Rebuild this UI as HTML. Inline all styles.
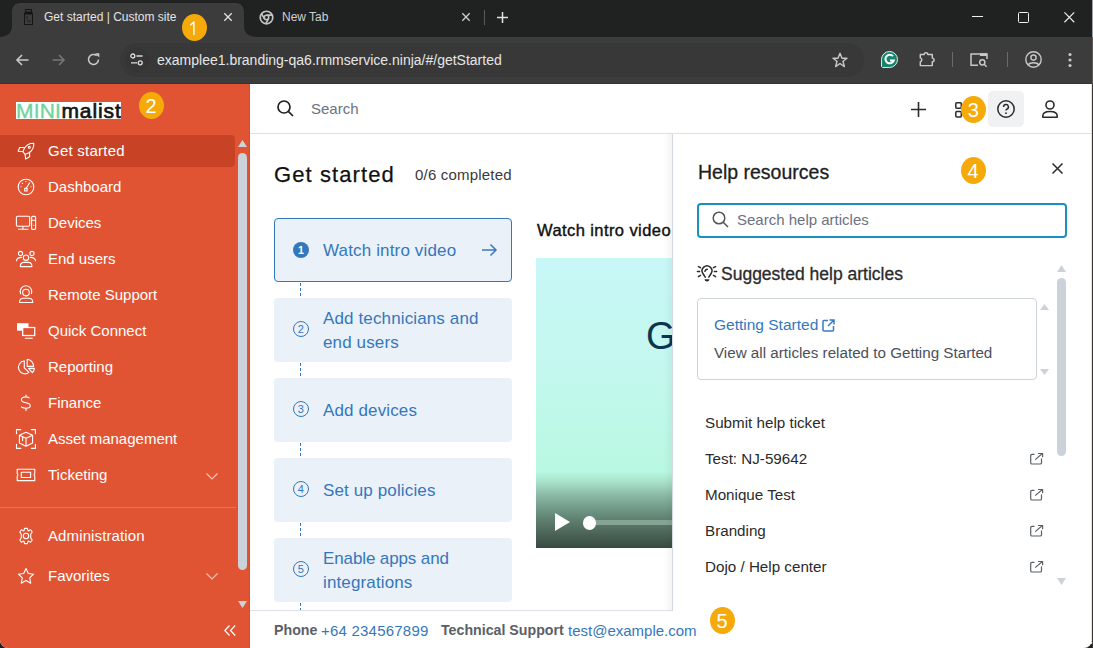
<!DOCTYPE html>
<html><head><meta charset="utf-8">
<style>
*{box-sizing:border-box;margin:0;padding:0}
html,body{width:1093px;height:648px;overflow:hidden;background:#202121;font-family:"Liberation Sans",sans-serif}
.a{position:absolute}
.t{position:absolute;white-space:nowrap;line-height:1}
svg{position:absolute;overflow:visible}
.badge{position:absolute;width:25px;height:27px;border-radius:50%;background:#f5aa0a;color:#fff;font-size:20px;text-align:center;line-height:28px}
.dash{position:absolute;left:300px;width:1px;background:repeating-linear-gradient(#3577bd 0 3px,transparent 3px 5px)}
</style></head><body>
<div class="a" style="left:0px;top:0px;width:1093px;height:37px;background:#202121;"></div>
<svg style="left:0px;top:3px;" width="256" height="34" viewBox="0 0 256 34"><path d="M0 34C6 34 12 30 12 24V9C12 4 15 0 20 0H236C241 0 244 4 244 9V24C244 30 250 34 256 34Z" fill="#3c3c3c"/></svg>
<svg style="left:24px;top:9px;" width="10" height="16" viewBox="0 0 10 16"><rect x="1.5" y="0.5" width="6" height="2.5" fill="none" stroke="#151515" stroke-width="1"/><rect x="0.5" y="3" width="8" height="2" fill="#151515"/><rect x="0.5" y="5" width="8" height="10.5" fill="none" stroke="#151515" stroke-width="1"/><path d="M2.5 7L3.5 10M6 11V13M3 12H5" stroke="#151515" stroke-width="0.8"/></svg>
<div class="t" style="left:44px;top:11px;font-size:12px;color:#e3e3e3;font-weight:400;letter-spacing:0px;">Get started | Custom site</div>
<svg style="left:224px;top:13px;" width="8" height="8" viewBox="0 0 8 8"><path d="M0.3 0.3L7.7 7.7M7.7 0.3L0.3 7.7" stroke="#e3e3e3" stroke-width="1.3"/></svg>
<svg style="left:259px;top:10px;" width="15" height="15" viewBox="0 0 16 16"><circle cx="8" cy="8" r="6.7" fill="none" stroke="#c4c4c4" stroke-width="1.8"/><circle cx="8" cy="8" r="2.4" fill="none" stroke="#c4c4c4" stroke-width="1.7"/><path d="M8 5.5H14.3M5.8 9.3L2.6 3.9M10.2 9.3L7 14.7" stroke="#c4c4c4" stroke-width="1.7"/></svg>
<div class="t" style="left:282px;top:11px;font-size:12px;color:#d0d0d0;font-weight:400;letter-spacing:0px;">New Tab</div>
<svg style="left:462px;top:13px;" width="8" height="8" viewBox="0 0 8 8"><path d="M0.3 0.3L7.7 7.7M7.7 0.3L0.3 7.7" stroke="#d0d0d0" stroke-width="1.3"/></svg>
<div class="a" style="left:484px;top:10px;width:1px;height:15px;background:#5a5a5a;"></div>
<svg style="left:497px;top:12px;" width="11" height="11" viewBox="0 0 11 11"><path d="M5.5 0V11M0 5.5H11" stroke="#e3e3e3" stroke-width="1.5"/></svg>
<div class="a" style="left:972px;top:16px;width:11px;height:1px;background:#f0f0f0;"></div>
<div class="a" style="left:1018px;top:12px;width:10.5px;height:10.5px;background:transparent;border:1.2px solid #f0f0f0;border-radius:1.5px"></div>
<svg style="left:1063.5px;top:11.8px;" width="10.7" height="10.7" viewBox="0 0 12 12"><path d="M0.5 0.5L11.5 11.5M11.5 0.5L0.5 11.5" stroke="#f0f0f0" stroke-width="1.3"/></svg>
<div class="a" style="left:0px;top:37px;width:1093px;height:47px;background:#3c3c3c;"></div>
<div class="a" style="left:0px;top:83px;width:1093px;height:1px;background:#333;"></div>
<svg style="left:16px;top:54px;" width="13" height="12" viewBox="0 0 13 12"><path d="M12.5 6H1.2M6 1L1 6L6 11" fill="none" stroke="#c8c8c8" stroke-width="1.6"/></svg>
<svg style="left:52px;top:54px;" width="13" height="12" viewBox="0 0 13 12"><path d="M0.5 6H11.8M7 1L12 6L7 11" fill="none" stroke="#767676" stroke-width="1.6"/></svg>
<svg style="left:87px;top:53px;" width="13" height="13" viewBox="0 0 13 13"><path d="M11.5 6.5A5 5 0 1 1 9.8 2.7" fill="none" stroke="#c8c8c8" stroke-width="1.6"/><path d="M8 0.3H12.3V4.6Z" fill="#c8c8c8"/></svg>
<div class="a" style="left:120px;top:43px;width:744px;height:34px;background:#383838;border-radius:17px"></div>
<div class="a" style="left:125px;top:48px;width:24px;height:24px;background:#353535;border-radius:50%"></div>
<svg style="left:130px;top:53px;" width="14" height="13" viewBox="0 0 14 13"><circle cx="2.8" cy="3" r="2" fill="none" stroke="#dcdcdc" stroke-width="1.3"/><path d="M6.5 3H12.5M1 9.8H7" stroke="#dcdcdc" stroke-width="1.3"/><circle cx="10.2" cy="9.8" r="2" fill="none" stroke="#dcdcdc" stroke-width="1.3"/></svg>
<div class="t" style="left:157px;top:53px;font-size:14px;color:#e6e6e6;font-weight:400;letter-spacing:0px;">examplee1.branding-qa6.rmmservice.ninja/#/getStarted</div>
<svg style="left:832px;top:52px;" width="16" height="16" viewBox="0 0 16 16"><path d="M8 1.3L10 6.2H15L11 9.3L12.4 14.6L8 11.5L3.6 14.6L5 9.3L1 6.2H6Z" fill="none" stroke="#c8c8c8" stroke-width="1.4" stroke-linejoin="round"/></svg>
<svg style="left:881px;top:51px;" width="17" height="17" viewBox="0 0 17 17"><path d="M8.5 0.5A8 8 0 1 1 8.5 16.5H1.5L0.5 15.5V8.5A8 8 0 0 1 8.5 0.5Z" fill="#15866e"/><path d="M8.5 0.5A8 8 0 1 1 8.5 16.5H1.5L0.5 15.5V8.5A8 8 0 0 1 8.5 0.5Z" fill="none" stroke="#e8e8e8" stroke-width="1"/><path d="M12 5.2A4.3 4.3 0 1 0 12.8 9.5H9" fill="none" stroke="#fff" stroke-width="2"/></svg>
<svg style="left:917px;top:50px;" width="20" height="18" viewBox="0 0 20 18"><path d="M3.3 4.5H7.2A1.8 1.8 0 0 1 10.8 4.5H15.3V8.1A1.8 1.8 0 0 1 15.3 11.7V15.6H3.3V11.8A2 2 0 0 0 3.3 7.9Z" fill="none" stroke="#cacaca" stroke-width="1.45" stroke-linejoin="round"/></svg>
<div class="a" style="left:952px;top:52px;width:1px;height:15px;background:#6a6a6a;"></div>
<svg style="left:970px;top:52px;" width="19" height="16" viewBox="0 0 19 16"><path d="M8 13.2H1V2H17V7" fill="none" stroke="#c8c8c8" stroke-width="1.5"/><rect x="10" y="1.2" width="7" height="2.8" fill="#c8c8c8"/><circle cx="12.3" cy="10.3" r="2.6" fill="none" stroke="#c8c8c8" stroke-width="1.5"/><path d="M14.2 12.3L16.6 14.8" stroke="#c8c8c8" stroke-width="1.5"/></svg>
<div class="a" style="left:1007px;top:52px;width:1px;height:15px;background:#6a6a6a;"></div>
<svg style="left:1025px;top:51px;" width="17" height="17" viewBox="0 0 17 17"><circle cx="8.5" cy="8.5" r="7.7" fill="none" stroke="#c8c8c8" stroke-width="1.4"/><circle cx="8.5" cy="6.6" r="2.6" fill="none" stroke="#c8c8c8" stroke-width="1.4"/><path d="M3.3 13.8C5 11 12 11 13.7 13.8" fill="none" stroke="#c8c8c8" stroke-width="1.4"/></svg>
<svg style="left:1068px;top:52px;" width="4" height="16" viewBox="0 0 4 16"><circle cx="2" cy="2.5" r="1.6" fill="#c8c8c8"/><circle cx="2" cy="8" r="1.6" fill="#c8c8c8"/><circle cx="2" cy="13.5" r="1.6" fill="#c8c8c8"/></svg>
<div class="a" style="left:0px;top:84px;width:1092px;height:564px;background:#fff;border-radius:0 0 8px 8px"></div>
<div class="a" style="left:1092px;top:0px;width:1px;height:37px;background:#9aa0a8;"></div>
<div class="a" style="left:1092px;top:37px;width:1px;height:47px;background:#5e5858;"></div>
<div class="a" style="left:1092px;top:84px;width:1px;height:564px;background:#3d3535;"></div>
<div class="a" style="left:1091px;top:84px;width:1px;height:560px;background:#dfe4ea;"></div>
<div class="badge" style="left:181.5px;top:14.2px"></div>
<svg style="left:189px;top:20px;" width="8" height="16" viewBox="0 0 8 16"><path d="M5.6 15V1.3H4.8L1.2 4.2V5.9L4.2 3.7V15Z" fill="#fff"/></svg>
<div class="a" style="left:0px;top:84px;width:250px;height:564px;background:#e15433;border-bottom-left-radius:8px"></div>
<div class="a" style="left:249px;top:84px;width:1px;height:564px;background:#d94b29;"></div>
<div class="a" style="left:16px;top:102px;width:105px;height:17px;background:#fff;overflow:hidden"><div class="t" style="left:0;top:-2px;font-size:21px;color:#6fd49b;letter-spacing:0.15px;-webkit-text-stroke:0.35px #6fd49b">MINI<span style="color:#151515;letter-spacing:0.9px;-webkit-text-stroke:0.7px #151515;margin-left:0.5px">malist</span></div></div>
<div class="badge" style="left:138.6px;top:92.2px">2</div>
<div class="a" style="left:0px;top:135px;width:235px;height:32px;background:#c84325;border-radius:0 4px 4px 0"></div>
<div class="t" style="left:48px;top:143px;font-size:15px;color:#fff;font-weight:400;letter-spacing:0.25px;">Get started</div>
<div class="t" style="left:48px;top:179px;font-size:15px;color:#fff;font-weight:400;letter-spacing:0px;">Dashboard</div>
<div class="t" style="left:48px;top:215px;font-size:15px;color:#fff;font-weight:400;letter-spacing:0px;">Devices</div>
<div class="t" style="left:48px;top:251px;font-size:15px;color:#fff;font-weight:400;letter-spacing:0px;">End users</div>
<div class="t" style="left:48px;top:287px;font-size:15px;color:#fff;font-weight:400;letter-spacing:0px;">Remote Support</div>
<div class="t" style="left:48px;top:323px;font-size:15px;color:#fff;font-weight:400;letter-spacing:0px;">Quick Connect</div>
<div class="t" style="left:48px;top:359px;font-size:15px;color:#fff;font-weight:400;letter-spacing:0px;">Reporting</div>
<div class="t" style="left:48px;top:395px;font-size:15px;color:#fff;font-weight:400;letter-spacing:0px;">Finance</div>
<div class="t" style="left:48px;top:431px;font-size:15px;color:#fff;font-weight:400;letter-spacing:0px;">Asset management</div>
<div class="t" style="left:48px;top:467px;font-size:15px;color:#fff;font-weight:400;letter-spacing:0px;">Ticketing</div>
<div class="t" style="left:48px;top:528px;font-size:15px;color:#fff;font-weight:400;letter-spacing:0.12px;">Administration</div>
<div class="t" style="left:48px;top:568px;font-size:15px;color:#fff;font-weight:400;letter-spacing:0px;">Favorites</div>
<div class="a" style="left:0px;top:507px;width:236px;height:1px;background:#e6705a;"></div>
<svg style="left:14px;top:140px;" width="24" height="24" viewBox="0 0 24 24"><path d="M19.8 3.2C15.3 3 12.1 5.3 10.1 8.7L8.9 11.9L11.2 14.3L14.6 12.9C18 10.9 20.1 7.6 19.8 3.2Z" fill="none" stroke="#fff" stroke-width="1.1" stroke-linejoin="round" stroke-linecap="round"/><circle cx="15.3" cy="7.3" r="1" fill="none" stroke="#fff" stroke-width="1.1" stroke-linejoin="round" stroke-linecap="round"/><path d="M10.3 7.5L5.7 7.5L4.2 11.2L8.8 11.5M15.6 12.4L15.6 16.7L11.6 18.9L11.1 14.4" fill="none" stroke="#fff" stroke-width="1.1" stroke-linejoin="round" stroke-linecap="round"/></svg>
<svg style="left:14px;top:176px;" width="24" height="24" viewBox="0 0 24 24"><circle cx="12" cy="11" r="7.8" fill="none" stroke="#fff" stroke-width="1.1" stroke-linejoin="round" stroke-linecap="round"/><path d="M12.3 12.2L15.6 6.9" fill="none" stroke="#fff" stroke-width="1.1" stroke-linejoin="round" stroke-linecap="round"/><rect x="10.7" y="12.4" width="2.4" height="2.6" fill="none" stroke="#fff" stroke-width="1.1" stroke-linejoin="round" stroke-linecap="round"/><path d="M8.4 7.4h.1M11.9 5.6h.1M6.9 10.8h.1M17 10.8h.1" fill="none" stroke="#fff" stroke-width="1.1" stroke-linejoin="round" stroke-linecap="round" stroke-width="1.6"/></svg>
<svg style="left:14px;top:211px;" width="24" height="24" viewBox="0 0 24 24"><rect x="2.4" y="5.2" width="13.3" height="10" rx="1.2" fill="none" stroke="#fff" stroke-width="1.1" stroke-linejoin="round" stroke-linecap="round"/><path d="M8.9 15.4V17.8M4.4 18.2H14" fill="none" stroke="#fff" stroke-width="1.1" stroke-linejoin="round" stroke-linecap="round"/><rect x="17.6" y="5.4" width="4" height="13" rx="1" fill="none" stroke="#fff" stroke-width="1.1" stroke-linejoin="round" stroke-linecap="round"/><path d="M17.8 9.3H21.4" fill="none" stroke="#fff" stroke-width="1.1" stroke-linejoin="round" stroke-linecap="round"/><path d="M19.6 14.3h.1" fill="none" stroke="#fff" stroke-width="1.1" stroke-linejoin="round" stroke-linecap="round" stroke-width="1.5"/></svg>
<svg style="left:14px;top:247px;" width="24" height="24" viewBox="0 0 24 24"><circle cx="6.5" cy="6.5" r="2.1" fill="none" stroke="#fff" stroke-width="1.1" stroke-linejoin="round" stroke-linecap="round"/><circle cx="18" cy="6.5" r="2.1" fill="none" stroke="#fff" stroke-width="1.1" stroke-linejoin="round" stroke-linecap="round"/><circle cx="12" cy="10.7" r="2.7" fill="none" stroke="#fff" stroke-width="1.1" stroke-linejoin="round" stroke-linecap="round"/><path d="M2.5 13.8Q2.8 10.5 7.6 10.4M21.5 13.8Q21.2 10.5 16.4 10.4" fill="none" stroke="#fff" stroke-width="1.1" stroke-linejoin="round" stroke-linecap="round"/><path d="M6.3 19.6Q6.3 15.4 9.8 15.4H14.4Q17.9 15.4 17.9 19.6Z" fill="none" stroke="#fff" stroke-width="1.1" stroke-linejoin="round" stroke-linecap="round"/></svg>
<svg style="left:14px;top:283px;" width="24" height="24" viewBox="0 0 24 24"><circle cx="12" cy="9.6" r="3.3" fill="none" stroke="#fff" stroke-width="1.1" stroke-linejoin="round" stroke-linecap="round"/><path d="M6.6 10.8A5.8 5.8 0 1 1 17.4 10.6" fill="none" stroke="#fff" stroke-width="1.1" stroke-linejoin="round" stroke-linecap="round"/><path d="M11.8 12.8H13.3" fill="none" stroke="#fff" stroke-width="1.1" stroke-linejoin="round" stroke-linecap="round"/><path d="M5.5 19.5Q5.6 15.3 9 15.3H15.3Q18.6 15.3 18.8 19.5Z" fill="none" stroke="#fff" stroke-width="1.1" stroke-linejoin="round" stroke-linecap="round"/></svg>
<svg style="left:14px;top:319px;" width="24" height="24" viewBox="0 0 24 24"><rect x="3" y="4.2" width="11.5" height="7.5" fill="#fff"/><rect x="8.7" y="8.5" width="12" height="8" fill="#e05332" stroke="#fff" stroke-width="1.25"/><path d="M11.3 19.3H18.3" fill="none" stroke="#fff" stroke-width="1.1" stroke-linejoin="round" stroke-linecap="round"/></svg>
<svg style="left:14px;top:355px;" width="24" height="24" viewBox="0 0 24 24"><path d="M10.3 5.84V12.9L15 17.4A6.5 6.5 0 1 1 10.3 5.84Z" fill="none" stroke="#fff" stroke-width="1.1" stroke-linejoin="round" stroke-linecap="round"/><path d="M13.2 4.2V11.4H19.6A7 7 0 0 0 13.2 4.2Z" fill="none" stroke="#fff" stroke-width="1.1" stroke-linejoin="round" stroke-linecap="round"/><path d="M14.6 13.4H20.4A6.8 6.8 0 0 1 18.4 17.6Z" fill="none" stroke="#fff" stroke-width="1.1" stroke-linejoin="round" stroke-linecap="round"/></svg>
<svg style="left:14px;top:391px;" width="24" height="24" viewBox="0 0 24 24"><path d="M15.2 6.9Q14 5.9 12 5.9Q7.4 5.9 7.4 8.8Q7.4 11.2 11.8 11.8Q16.3 12.5 16.3 14.7Q16.3 17.2 12 17.2Q9.4 17.2 7.5 16.1M12 4V5.9M12 17.2V19.4" fill="none" stroke="#fff" stroke-width="1.1" stroke-linejoin="round" stroke-linecap="round"/></svg>
<svg style="left:14px;top:427px;" width="24" height="24" viewBox="0 0 24 24"><path d="M2.5 6.8V2.6H6.8M17.3 2.6H21.4V6.8M2.5 17.3V21.4H6.8M17.3 21.4H21.4V17.3" fill="none" stroke="#fff" stroke-width="1.1" stroke-linejoin="round" stroke-linecap="round"/><path d="M12 5.3L18.6 8.3V16L12 19.2L5.4 16V8.3Z M5.4 8.3L12 11.3L18.6 8.3M12 11.3V19.2M8.6 9.9V13.5" fill="none" stroke="#fff" stroke-width="1.1" stroke-linejoin="round" stroke-linecap="round"/></svg>
<svg style="left:14px;top:463px;" width="24" height="24" viewBox="0 0 24 24"><path d="M3.2 6.2H20.8V10.6Q19.4 11.8 20.8 13.2V17.6H3.2V13.2Q4.6 11.8 3.2 10.6Z" fill="none" stroke="#fff" stroke-width="1.1" stroke-linejoin="round" stroke-linecap="round"/><rect x="7.3" y="9.3" width="9.3" height="5.2" fill="none" stroke="#fff" stroke-width="1.1" stroke-linejoin="round" stroke-linecap="round"/></svg>
<svg style="left:14px;top:524px;" width="24" height="24" viewBox="0 0 24 24"><path d="M10.6 4.4H13.4L14.1 6.9L16.6 5.8L18.2 8L16.7 10.3V13.7L18.2 16L16.6 18.2L14.1 17.1L13.4 19.6H10.6L9.9 17.1L7.4 18.2L5.8 16L7.3 13.7V10.3L5.8 8L7.4 5.8L9.9 6.9Z" fill="none" stroke="#fff" stroke-width="1.1" stroke-linejoin="round" stroke-linecap="round"/><circle cx="12" cy="12" r="2.7" fill="none" stroke="#fff" stroke-width="1.1" stroke-linejoin="round" stroke-linecap="round"/></svg>
<svg style="left:14px;top:564px;" width="24" height="24" viewBox="0 0 24 24"><path d="M12 4.5L14.3 9.5L19.6 10.2L15.7 13.9L16.7 19.2L12 16.6L7.3 19.2L8.3 13.9L4.4 10.2L9.7 9.5Z" fill="none" stroke="#fff" stroke-width="1.1" stroke-linejoin="round" stroke-linecap="round"/></svg>
<svg style="left:206px;top:473px;" width="12" height="7" viewBox="0 0 12 7"><path d="M0.5 0.5L6 6L11.5 0.5" fill="none" stroke="#f5c3b5" stroke-width="1.2"/></svg>
<svg style="left:206px;top:573px;" width="12" height="7" viewBox="0 0 12 7"><path d="M0.5 0.5L6 6L11.5 0.5" fill="none" stroke="#f5c3b5" stroke-width="1.2"/></svg>
<svg style="left:224px;top:625px;" width="12" height="11" viewBox="0 0 12 11"><path d="M5.5 0.5L0.8 5.5L5.5 10.5M11.2 0.5L6.5 5.5L11.2 10.5" fill="none" stroke="#fff" stroke-width="1.2"/></svg>
<svg style="left:238px;top:140px;" width="9" height="7" viewBox="0 0 9 7"><path d="M4.5 0L9 7H0Z" fill="#ccd2d9"/></svg>
<div class="a" style="left:238px;top:153px;width:9px;height:417px;background:#ccd2d9;border-radius:4.5px"></div>
<svg style="left:238px;top:601px;" width="9" height="7" viewBox="0 0 9 7"><path d="M0 0H9L4.5 7Z" fill="#ccd2d9"/></svg>
<div class="a" style="left:250px;top:133px;width:842px;height:1px;background:#dde1e6;"></div>
<svg style="left:277px;top:100px;" width="17" height="17" viewBox="0 0 17 17"><circle cx="7" cy="7" r="6" fill="none" stroke="#1f1f1f" stroke-width="1.7"/><path d="M11.3 11.3L16 16" stroke="#1f1f1f" stroke-width="1.7"/></svg>
<div class="t" style="left:311px;top:101px;font-size:15px;color:#6b7280;font-weight:400;letter-spacing:0px;">Search</div>
<svg style="left:911px;top:102px;" width="15" height="15" viewBox="0 0 15 15"><path d="M7.5 0V15M0 7.5H15" stroke="#2b2b2b" stroke-width="1.6"/></svg>
<svg style="left:955px;top:102px;" width="16" height="16" viewBox="0 0 16 16"><rect x="0.8" y="0.8" width="5.5" height="5.5" rx="1" fill="none" stroke="#2b2b2b" stroke-width="1.5"/><rect x="0.8" y="9.5" width="5.5" height="5.5" rx="1" fill="none" stroke="#2b2b2b" stroke-width="1.5"/></svg>
<div class="badge" style="left:960.7px;top:96.2px">3</div>
<div class="a" style="left:988px;top:91px;width:36px;height:36px;background:#f0f1f3;border-radius:5px"></div>
<svg style="left:997px;top:100px;" width="18" height="18" viewBox="0 0 18 18"><circle cx="9" cy="9" r="8.2" fill="none" stroke="#2b2b2b" stroke-width="1.5"/><path d="M6.6 7A2.4 2.4 0 1 1 9.8 9.2C9.2 9.5 9 9.9 9 10.6" fill="none" stroke="#2b2b2b" stroke-width="1.5"/><circle cx="9" cy="13.2" r="0.9" fill="#2b2b2b"/></svg>
<svg style="left:1042px;top:100px;" width="16" height="18" viewBox="0 0 16 18"><circle cx="8" cy="5" r="4" fill="none" stroke="#2b2b2b" stroke-width="1.6"/><path d="M0.8 17.2V16C0.8 13 4 11.5 8 11.5S15.2 13 15.2 16V17.2Z" fill="none" stroke="#2b2b2b" stroke-width="1.6" stroke-linejoin="round"/></svg>
<div class="t" style="left:274px;top:164px;font-size:22px;color:#111;font-weight:400;letter-spacing:1.1px;-webkit-text-stroke:0.25px #111">Get started</div>
<div class="t" style="left:415px;top:167px;font-size:15px;color:#3a3a3a;font-weight:400;letter-spacing:0.2px;">0/6 completed</div>
<div class="dash" style="top:283px;height:13px"></div>
<div class="dash" style="top:363px;height:13px"></div>
<div class="dash" style="top:443px;height:13px"></div>
<div class="dash" style="top:523px;height:13px"></div>
<div class="dash" style="top:603px;height:8px"></div>
<div class="a" style="left:274px;top:218px;width:238px;height:64px;background:#eaf1f8;border:1px solid #3577bd;border-radius:4px"></div>
<div class="a" style="left:293px;top:241.5px;width:16px;height:16px;background:#3577bd;border-radius:50%"></div>
<div class="t" style="left:298px;top:244.5px;font-size:10.5px;color:#fff;font-weight:700;letter-spacing:0px;">1</div>
<div class="t" style="left:323px;top:241.5px;font-size:17px;color:#3577bd;font-weight:400;letter-spacing:0.15px;">Watch intro video</div>
<svg style="left:482px;top:244px;" width="15" height="12" viewBox="0 0 15 12"><path d="M0 6H14M8.5 0.5L14 6L8.5 11.5" fill="none" stroke="#3b7abf" stroke-width="1.5"/></svg>
<div class="a" style="left:274px;top:298px;width:238px;height:64px;background:#eaf1f8;border-radius:4px"></div>
<div class="a" style="left:293px;top:321px;width:16px;height:16px;background:transparent;border:1.2px solid #3577bd;border-radius:50%"></div>
<div class="t" style="left:297.8px;top:323.5px;font-size:11px;color:#3577bd;font-weight:400;letter-spacing:0px;">2</div>
<div class="t" style="left:323px;top:309.5px;font-size:17px;color:#3577bd;font-weight:400;letter-spacing:0.13px;">Add technicians and</div>
<div class="t" style="left:323px;top:333.5px;font-size:17px;color:#3577bd;font-weight:400;letter-spacing:0.13px;">end users</div>
<div class="a" style="left:274px;top:378px;width:238px;height:64px;background:#eaf1f8;border-radius:4px"></div>
<div class="a" style="left:293px;top:401px;width:16px;height:16px;background:transparent;border:1.2px solid #3577bd;border-radius:50%"></div>
<div class="t" style="left:297.8px;top:403.5px;font-size:11px;color:#3577bd;font-weight:400;letter-spacing:0px;">3</div>
<div class="t" style="left:323px;top:401.5px;font-size:17px;color:#3577bd;font-weight:400;letter-spacing:0.13px;">Add devices</div>
<div class="a" style="left:274px;top:458px;width:238px;height:64px;background:#eaf1f8;border-radius:4px"></div>
<div class="a" style="left:293px;top:481px;width:16px;height:16px;background:transparent;border:1.2px solid #3577bd;border-radius:50%"></div>
<div class="t" style="left:297.8px;top:483.5px;font-size:11px;color:#3577bd;font-weight:400;letter-spacing:0px;">4</div>
<div class="t" style="left:323px;top:481.5px;font-size:17px;color:#3577bd;font-weight:400;letter-spacing:0.13px;">Set up policies</div>
<div class="a" style="left:274px;top:538px;width:238px;height:64px;background:#eaf1f8;border-radius:4px"></div>
<div class="a" style="left:293px;top:561px;width:16px;height:16px;background:transparent;border:1.2px solid #3577bd;border-radius:50%"></div>
<div class="t" style="left:297.8px;top:563.5px;font-size:11px;color:#3577bd;font-weight:400;letter-spacing:0px;">5</div>
<div class="t" style="left:323px;top:549.5px;font-size:17px;color:#3577bd;font-weight:400;letter-spacing:-0.12px;">Enable apps and</div>
<div class="t" style="left:323px;top:573.5px;font-size:17px;color:#3577bd;font-weight:400;letter-spacing:0.13px;">integrations</div>
<div class="t" style="left:537px;top:222px;font-size:16.5px;color:#111;font-weight:400;letter-spacing:0.42px;-webkit-text-stroke:0.4px #111">Watch intro video</div>
<div class="a" style="left:536px;top:258px;width:136px;height:290px;overflow:hidden;background:linear-gradient(#c8f7f7 0%,#c3f8ee 40%,#b9f8e2 73.5%,#a9e3cb 77%,#8ab8a4 82%,#6e9583 87%,#5b7b6b 91%,#4a6255 95.5%,#384a3f 100%)"><div class="t" style="left:110px;top:59px;font-size:38px;color:#0c3550">G</div><svg style="left:19px;top:255px" width="15" height="18" viewBox="0 0 15 18"><path d="M0 0L15 9L0 18Z" fill="#fff"/></svg><div class="a" style="left:58px;top:261.5px;width:90px;height:5px;background:#87a394"></div><div class="a" style="left:46.5px;top:257.5px;width:13.5px;height:14px;border-radius:50%;background:#fff"></div></div>
<div class="a" style="left:250px;top:610px;width:423px;height:1px;background:#dde1e6;"></div>
<div class="t" style="left:274px;top:622.7px;font-size:14.2px;color:#5a6068;font-weight:700;letter-spacing:0px;">Phone</div>
<div class="t" style="left:321px;top:622.7px;font-size:15px;color:#3577bd;font-weight:400;letter-spacing:0.22px;">+64 234567899</div>
<div class="t" style="left:441px;top:622.7px;font-size:14.2px;color:#5a6068;font-weight:700;letter-spacing:0px;">Technical Support</div>
<div class="t" style="left:568px;top:622.7px;font-size:15px;color:#3577bd;font-weight:400;letter-spacing:0px;">test@example.com</div>
<div class="badge" style="left:709.5px;top:607.2px">5</div>
<div class="a" style="left:664px;top:134px;width:8px;height:476px;background:linear-gradient(90deg,rgba(0,0,0,0),rgba(0,0,0,0.045));"></div>
<div class="a" style="left:672px;top:134px;width:1px;height:477px;background:#d3d8de;"></div>
<div class="t" style="left:698px;top:163px;font-size:19.5px;color:#1e1e1e;font-weight:400;letter-spacing:0px;-webkit-text-stroke:0.3px #1e1e1e">Help resources</div>
<div class="badge" style="left:960.5px;top:157.2px">4</div>
<svg style="left:1052px;top:163px;" width="11" height="11" viewBox="0 0 11 11"><path d="M0.5 0.5L10.5 10.5M10.5 0.5L0.5 10.5" stroke="#2b2b2b" stroke-width="1.5"/></svg>
<div class="a" style="left:697px;top:203px;width:370px;height:35px;background:transparent;border:2px solid #1b8fbd;border-radius:4px"></div>
<svg style="left:712px;top:211px;" width="17" height="17" viewBox="0 0 17 17"><circle cx="7" cy="7" r="5.8" fill="none" stroke="#555" stroke-width="1.5"/><path d="M11.2 11.2L16 16" stroke="#555" stroke-width="1.5"/></svg>
<div class="t" style="left:737px;top:212px;font-size:15px;color:#6b7280;font-weight:400;letter-spacing:0px;">Search help articles</div>
<svg style="left:694px;top:262px;" width="28" height="24" viewBox="0 0 28 24"><path d="M11.2 15.2L8.9 11.5A4.9 4.9 0 1 1 17.1 11.5L14.8 15.2" fill="none" stroke="#2b2b2b" stroke-width="1.5" stroke-linecap="round"/><path d="M10.5 17.2H15.5Q15.3 19.6 13 19.6Q10.7 19.6 10.5 17.2Z" fill="#2b2b2b"/><path d="M3.4 9.5H5.6M20.4 9.5H22.6M4.4 4.6L6.5 5.7M21.6 4.6L19.5 5.7M4.4 14.6L6.5 13.4M21.6 14.6L19.5 13.4M10.9 9.3Q11.5 7.7 13.2 7.3" fill="none" stroke="#2b2b2b" stroke-width="1.5" stroke-linecap="round"/></svg>
<div class="t" style="left:721px;top:265.8px;font-size:17.5px;color:#2b2b2b;font-weight:400;letter-spacing:0px;-webkit-text-stroke:0.3px #2b2b2b">Suggested help articles</div>
<svg style="left:1057px;top:265px;" width="9" height="7" viewBox="0 0 9 7"><path d="M4.5 0L9 7H0Z" fill="#ccd2d9"/></svg>
<div class="a" style="left:1057px;top:278px;width:9px;height:178px;background:#ccd2d9;border-radius:4.5px"></div>
<svg style="left:1057px;top:578px;" width="9" height="7" viewBox="0 0 9 7"><path d="M0 0H9L4.5 7Z" fill="#ccd2d9"/></svg>
<div class="a" style="left:697px;top:298px;width:340px;height:82px;background:transparent;border:1px solid #cfd4da;border-radius:4px"></div>
<div class="t" style="left:714px;top:316.9px;font-size:15.5px;color:#3577bd;font-weight:400;letter-spacing:0px;">Getting Started</div>
<svg style="left:822px;top:319px;" width="13" height="13" viewBox="0 0 13 13"><path d="M6 1.5H2A1 1 0 0 0 1 2.5V11A1 1 0 0 0 2 12H10.5A1 1 0 0 0 11.5 11V7M7.5 1H12V5.5M12 1L6 7" fill="none" stroke="#3b7abf" stroke-width="1.5"/></svg>
<div class="t" style="left:714px;top:344.6px;font-size:15.2px;color:#4b5058;font-weight:400;letter-spacing:0px;">View all articles related to Getting Started</div>
<svg style="left:1040px;top:304px;" width="9" height="6" viewBox="0 0 9 6"><path d="M4.5 0L9 6H0Z" fill="#ccd2d9"/></svg>
<svg style="left:1040px;top:369px;" width="9" height="6" viewBox="0 0 9 6"><path d="M0 0H9L4.5 6Z" fill="#ccd2d9"/></svg>
<div class="t" style="left:705px;top:414.6px;font-size:15.2px;color:#2b2b2b;font-weight:400;letter-spacing:0px;">Submit help ticket</div>
<div class="t" style="left:705px;top:450.6px;font-size:15.2px;color:#2b2b2b;font-weight:400;letter-spacing:0px;">Test: NJ-59642</div>
<svg style="left:1029px;top:452px;" width="14" height="14" viewBox="0 0 14 14"><path d="M5.5 2.4H3A1.3 1.3 0 0 0 1.7 3.7V10.7A1.3 1.3 0 0 0 3 12H11.2A1.3 1.3 0 0 0 12.5 10.7V6.5M6.2 7.6L13.4 1.5M9 1.5H13.6V5.3" fill="none" stroke="#5b6168" stroke-width="1.2"/></svg>
<div class="t" style="left:705px;top:486.6px;font-size:15.2px;color:#2b2b2b;font-weight:400;letter-spacing:0px;">Monique Test</div>
<svg style="left:1029px;top:488px;" width="14" height="14" viewBox="0 0 14 14"><path d="M5.5 2.4H3A1.3 1.3 0 0 0 1.7 3.7V10.7A1.3 1.3 0 0 0 3 12H11.2A1.3 1.3 0 0 0 12.5 10.7V6.5M6.2 7.6L13.4 1.5M9 1.5H13.6V5.3" fill="none" stroke="#5b6168" stroke-width="1.2"/></svg>
<div class="t" style="left:705px;top:522.6px;font-size:15.2px;color:#2b2b2b;font-weight:400;letter-spacing:0px;">Branding</div>
<svg style="left:1029px;top:524px;" width="14" height="14" viewBox="0 0 14 14"><path d="M5.5 2.4H3A1.3 1.3 0 0 0 1.7 3.7V10.7A1.3 1.3 0 0 0 3 12H11.2A1.3 1.3 0 0 0 12.5 10.7V6.5M6.2 7.6L13.4 1.5M9 1.5H13.6V5.3" fill="none" stroke="#5b6168" stroke-width="1.2"/></svg>
<div class="t" style="left:705px;top:558.6px;font-size:15.2px;color:#2b2b2b;font-weight:400;letter-spacing:0px;">Dojo / Help center</div>
<svg style="left:1029px;top:560px;" width="14" height="14" viewBox="0 0 14 14"><path d="M5.5 2.4H3A1.3 1.3 0 0 0 1.7 3.7V10.7A1.3 1.3 0 0 0 3 12H11.2A1.3 1.3 0 0 0 12.5 10.7V6.5M6.2 7.6L13.4 1.5M9 1.5H13.6V5.3" fill="none" stroke="#5b6168" stroke-width="1.2"/></svg>
</body></html>
